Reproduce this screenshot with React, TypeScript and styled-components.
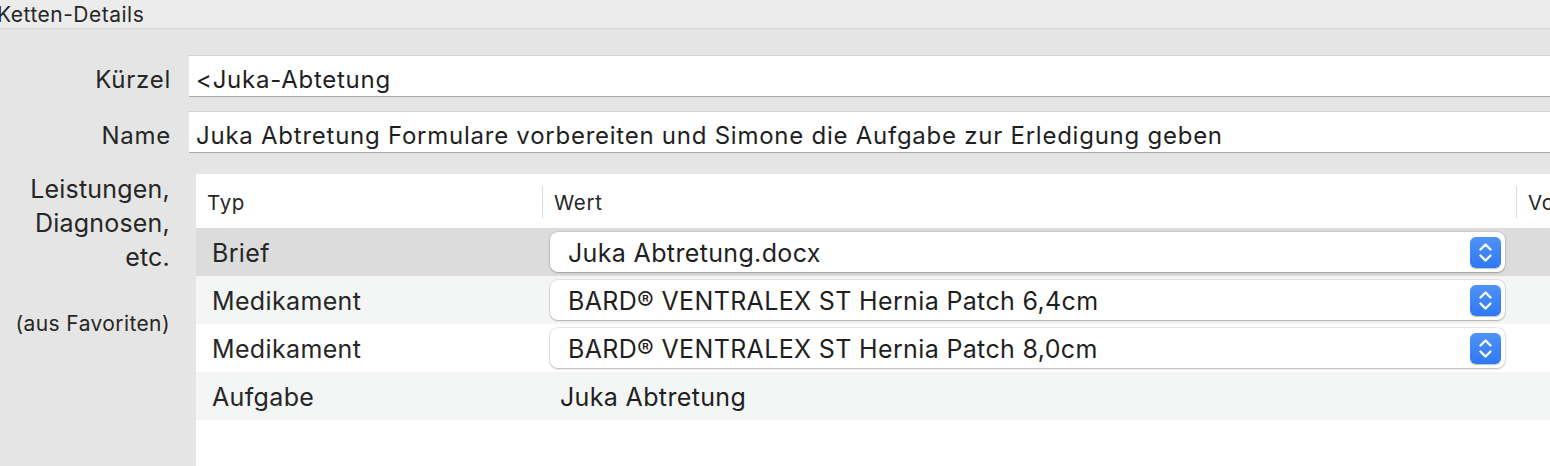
import React from "react";
import styled, { createGlobalStyle } from "styled-components";

const GlobalStyle = createGlobalStyle`
  html, body {
    margin: 0;
    padding: 0;
    background: #e5e5e5;
    font-family: Inter, "Liberation Sans", sans-serif;
    color: #262626;
    overflow: hidden;
  }
`;

interface RowData {
  typ: string;
  wert: string;
  popup: boolean;
}

const rows: RowData[] = [
  { typ: "Brief", wert: "Juka Abtretung.docx", popup: true },
  { typ: "Medikament", wert: "BARD® VENTRALEX ST Hernia Patch 6,4cm", popup: true },
  { typ: "Medikament", wert: "BARD® VENTRALEX ST Hernia Patch 8,0cm", popup: true },
  { typ: "Aufgabe", wert: "Juka Abtretung", popup: false },
];

const StepperIcon = () => (
  <svg width="31" height="31" viewBox="0 0 31 31">
    <path
      d="M10.5 12.5 L15.5 7.5 L20.5 12.5 M10.5 18.5 L15.5 23.5 L20.5 18.5"
      fill="none"
      stroke="#fff"
      strokeWidth="2.4"
      strokeLinecap="round"
      strokeLinejoin="round"
    />
  </svg>
);

const App: React.FC = () => {
  return (
    <Page>
      <GlobalStyle />
      <TitleBar>
        <TitleText>Ketten-Details</TitleText>
      </TitleBar>
      <Form>
        <FieldLabel>Kürzel</FieldLabel>
        <TextField>{"<Juka-Abtetung"}</TextField>
        <FieldLabel>Name</FieldLabel>
        <TextField>
          Juka Abtretung Formulare vorbereiten und Simone die Aufgabe zur
          Erledigung geben
        </TextField>
        <SideLabel>
          <span>Leistungen,</span>
          <span>Diagnosen,</span>
          <span>etc.</span>
          <SideNote>(aus Favoriten)</SideNote>
        </SideLabel>
        <Table>
          <HeaderRow>
            <HeaderCell>Typ</HeaderCell>
            <HeaderCell $divider>Wert</HeaderCell>
            <HeaderCell $divider>Vo</HeaderCell>
          </HeaderRow>
          {rows.map((row, i) => (
            <Row key={i} $tone={i === 0 ? "selected" : i % 2 === 1 ? "stripe" : "plain"}>
              <TypCell>{row.typ}</TypCell>
              <WertCell>
                {row.popup ? (
                  <Popup>
                    <PopupText>{row.wert}</PopupText>
                    <Stepper>
                      <StepperIcon />
                    </Stepper>
                  </Popup>
                ) : (
                  <PlainValue>{row.wert}</PlainValue>
                )}
              </WertCell>
              <RestCell />
            </Row>
          ))}
          <Filler />
        </Table>
      </Form>
    </Page>
  );
};

const Page = styled.div`
  width: 1550px;
  height: 466px;
  overflow: hidden;
  display: flex;
  flex-direction: column;
`;

const TitleBar = styled.div`
  height: 28px;
  flex: 0 0 28px;
  background: #ececec;
  border-bottom: 1px solid #d5d5d5;
  display: flex;
  align-items: center;
`;

const TitleText = styled.div`
  margin-left: -3px;
  margin-top: 1px;
  font-size: 21px;
  letter-spacing: 0.5px;
  color: #262626;
`;

const Form = styled.div`
  flex: 1;
  display: grid;
  grid-template-columns: 170px 1fr;
  grid-template-rows: 42px 42px 1fr;
  column-gap: 19px;
  row-gap: 14px;
  padding-top: 26px;
  min-height: 0;
`;

const FieldLabel = styled.div`
  padding-top: 6px;
  font-size: 24px;
  letter-spacing: 0.75px;
  text-align: right;
  align-self: center;
  margin-right: -1px;
  color: #262626;
`;

const TextField = styled.div`
  margin-right: -20px;
  background: #fff;
  border-top: 1px solid #d2d2d2;
  border-bottom: 1px solid #ababab;
  box-sizing: border-box;
  padding: 6px 7px 0;
  display: flex;
  align-items: center;
  font-size: 24px;
  letter-spacing: 0.75px;
  white-space: nowrap;
  color: #1f1f1f;
`;

const SideLabel = styled.div`
  margin-top: 5px;
  display: flex;
  flex-direction: column;
  align-items: flex-end;
  font-size: 25px;
  line-height: 34px;
  letter-spacing: 0.2px;
  color: #262626;
`;

const SideNote = styled.span`
  margin-top: 33px;
  font-size: 21px;
  letter-spacing: 0.4px;
`;

const Table = styled.div`
  margin-top: 7px;
  margin-left: 7px;
  margin-right: -40px;
  background: #fff;
  display: flex;
  flex-direction: column;
  font-size: 25px;
  letter-spacing: 0.35px;
`;

const HeaderRow = styled.div`
  height: 54px;
  flex: 0 0 54px;
  display: grid;
  grid-template-columns: 346px 974px 1fr;
  align-items: center;
`;

const HeaderCell = styled.div<{ $divider?: boolean }>`
  height: 32px;
  margin-top: 2px;
  display: flex;
  align-items: center;
  padding-left: 11px;
  border-left: ${(p) => (p.$divider ? "1px solid #dadada" : "none")};
  font-size: 20.5px;
  letter-spacing: 0.7px;
  color: #262626;
`;

const Row = styled.div<{ $tone: "selected" | "stripe" | "plain" }>`
  height: 48px;
  flex: 0 0 48px;
  display: grid;
  grid-template-columns: 346px 974px 1fr;
  align-items: center;
  background: ${(p) =>
    p.$tone === "selected" ? "#dcdcdc" : p.$tone === "stripe" ? "#f4f5f5" : "#ffffff"};
`;

const TypCell = styled.div`
  padding-left: 16px;
  padding-top: 2px;
  color: #262626;
`;

const WertCell = styled.div`
  padding: 0 11px 0 8px;
  display: flex;
  align-items: center;
`;

const RestCell = styled.div``;

const Popup = styled.div`
  flex: 1;
  height: 40px;
  box-sizing: border-box;
  background: #fff;
  border-radius: 8px;
  box-shadow: 0 0 0 1px rgba(0, 0, 0, 0.08), 0 1px 2px rgba(0, 0, 0, 0.22);
  display: flex;
  align-items: center;
  justify-content: space-between;
  padding: 0 4px 0 18px;
`;

const PopupText = styled.span`
  padding-top: 2px;
  color: #1f1f1f;
  white-space: nowrap;
`;

const Stepper = styled.div`
  width: 31px;
  height: 31px;
  border-radius: 6px;
  background: linear-gradient(#4f92fa, #2f78f1);
  box-shadow: 0 0.5px 1px rgba(0, 0, 0, 0.25);
  display: flex;
  align-items: center;
  justify-content: center;
`;

const PlainValue = styled.span`
  padding-left: 10px;
  padding-top: 2px;
  color: #1f1f1f;
`;

const Filler = styled.div`
  flex: 1;
  background: #fff;
`;

export default App;
